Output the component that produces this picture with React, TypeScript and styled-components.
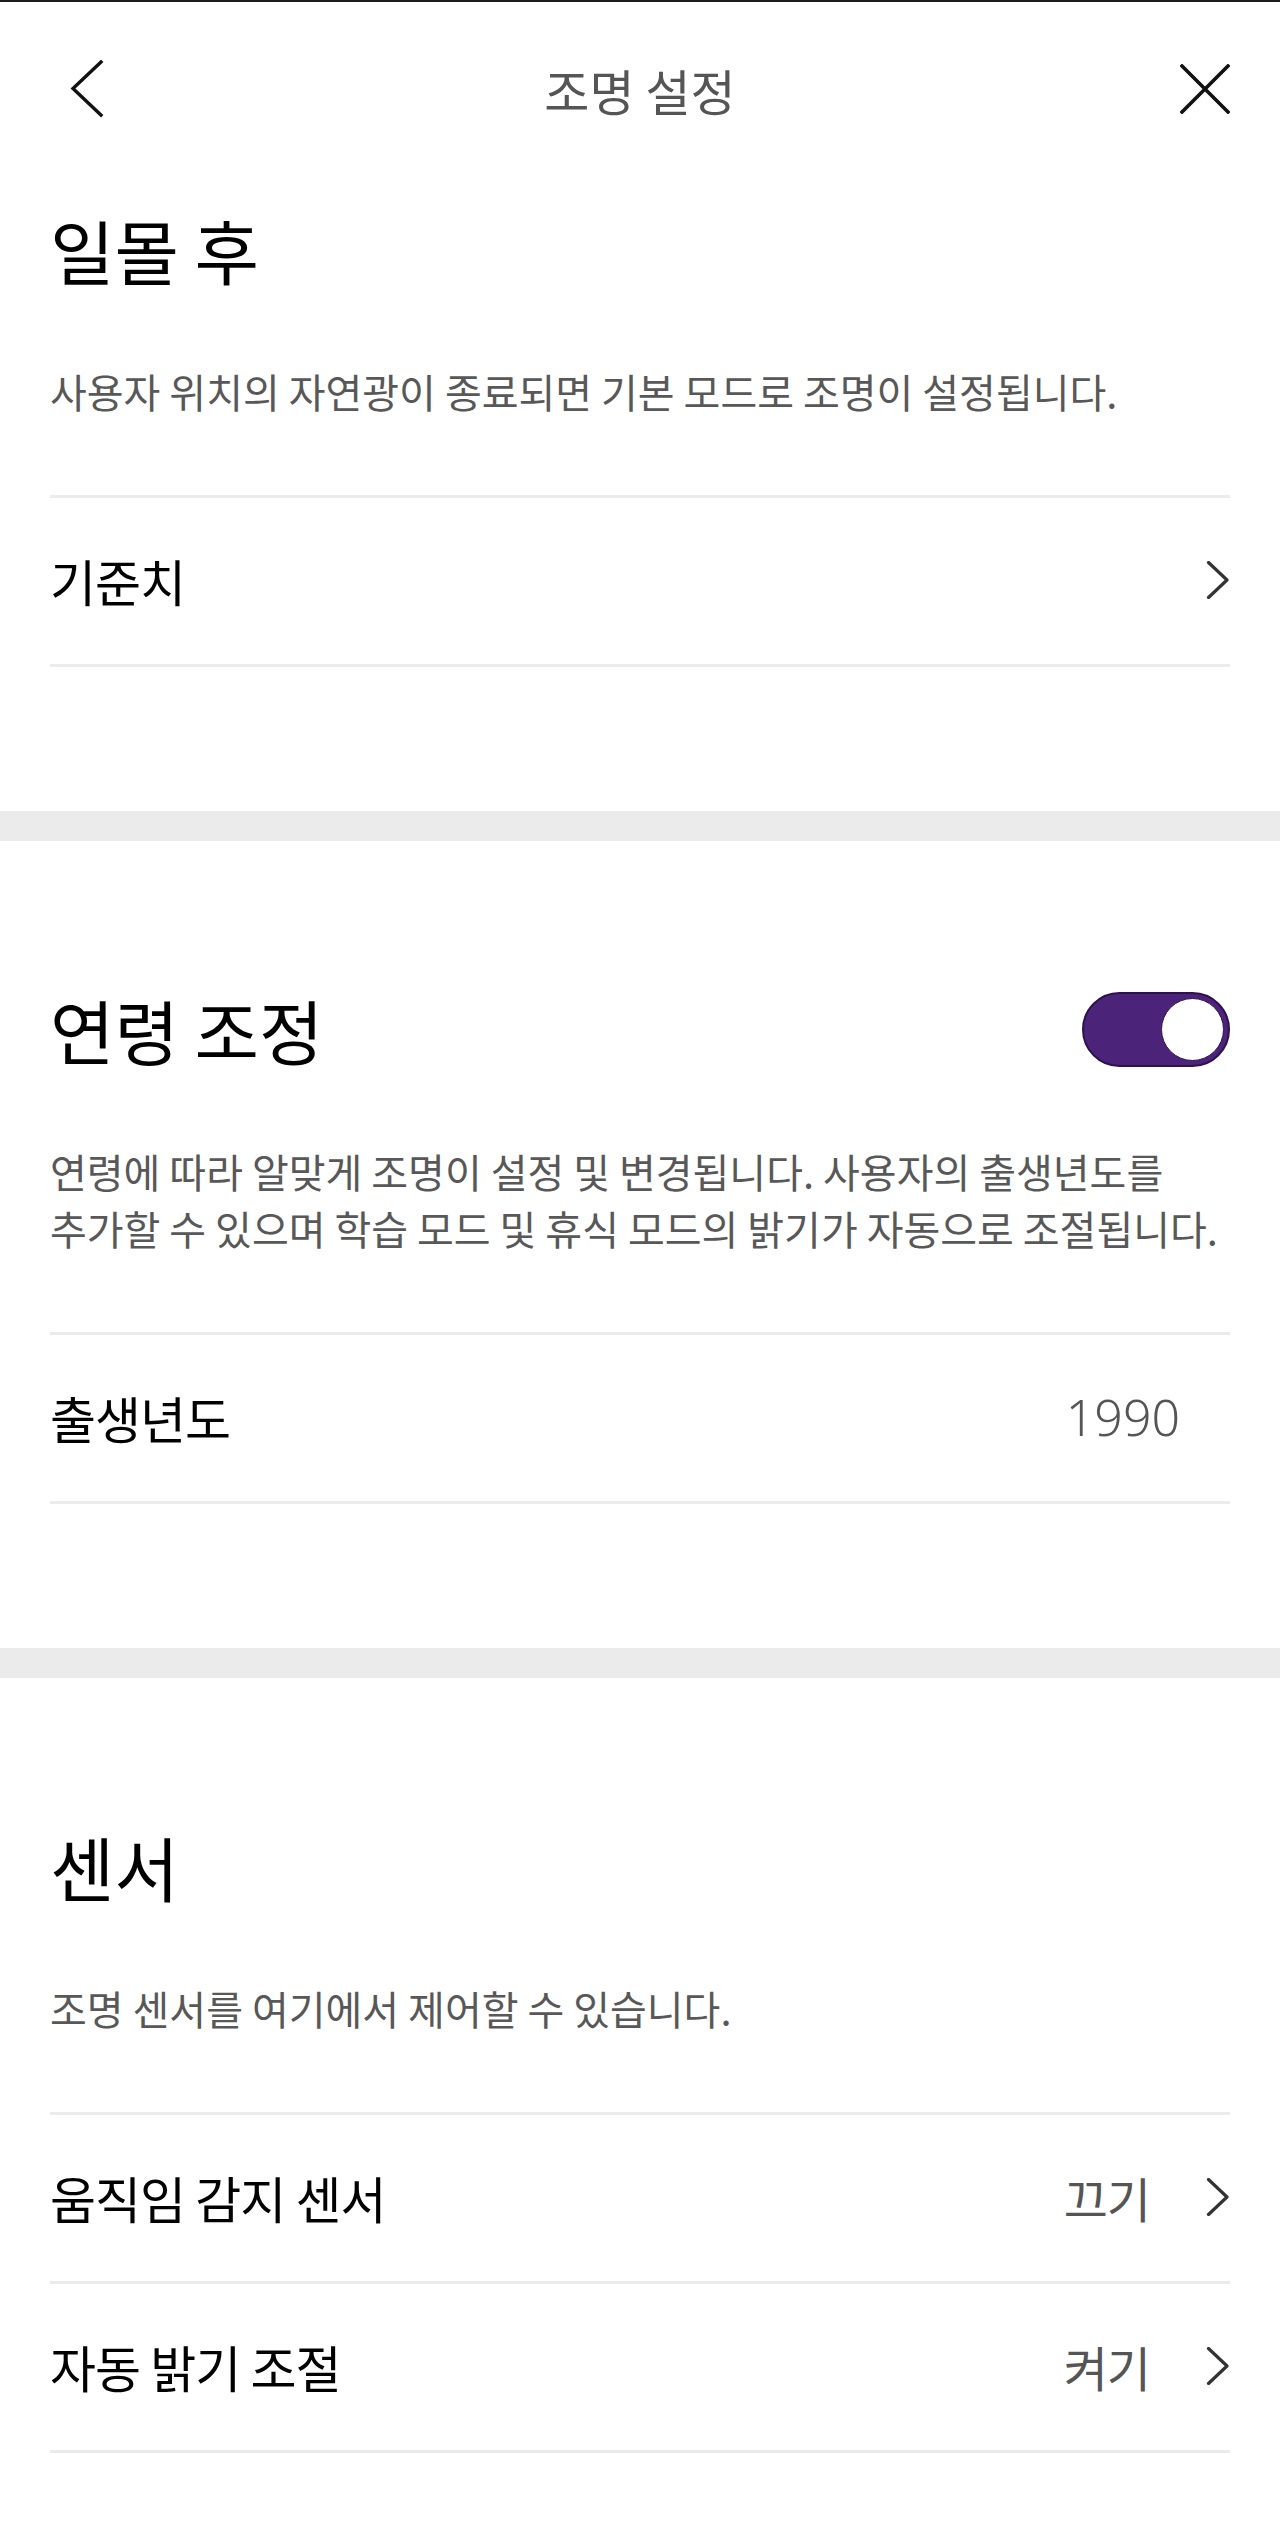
import React from "react";
import styled, { createGlobalStyle } from "styled-components";

const GlobalStyle = createGlobalStyle`
  html, body { margin: 0; padding: 0; background: #ffffff; }
  body { font-family: "Noto Sans CJK KR", "Noto Sans", sans-serif; }
  * { box-sizing: border-box; }
`;

const Page = styled.div`
  width: 1280px;
  min-height: 2524px;
  background: #fff;
  border-top: 2px solid #1e1e1e;
`;

const Header = styled.header`
  height: 174px;
  display: grid;
  grid-template-columns: 160px 1fr 160px;
  align-items: center;
  padding: 0 50px;
`;

const IconButton = styled.button<{ $align?: string; $offset?: number }>`
  border: 0;
  background: none;
  padding: 0;
  margin-left: ${(p) => p.$offset || 0}px;
  display: flex;
  justify-content: ${(p) => p.$align || "flex-start"};
  align-items: center;
  cursor: pointer;
`;

const HeaderTitle = styled.h1`
  margin: 0;
  text-align: center;
  font-size: 49px;
  font-weight: 400;
  color: #555;
  letter-spacing: 0;
`;

const Section = styled.section<{ $first?: boolean }>`
  padding: ${(p) => (p.$first ? 23 : 138)}px 50px 144px;
`;

const TitleRow = styled.div`
  display: flex;
  align-items: center;
  justify-content: space-between;
  height: 100px;
`;

const SectionTitle = styled.h2`
  margin: 0;
  font-size: 70px;
  font-weight: 400;
  color: #000;
  letter-spacing: 0;
`;

const Description = styled.p`
  margin: 64px 0 75px;
  font-size: 40px;
  line-height: 57px;
  color: #585858;
  letter-spacing: 0;
`;

const List = styled.div`
  border-top: 3px solid #ebebeb;
`;

const Row = styled.div`
  height: 169px;
  border-bottom: 3px solid #ebebeb;
  display: flex;
  align-items: center;
  justify-content: space-between;
  padding-bottom: 3px;
`;

const RowLabel = styled.span`
  font-size: 50px;
  color: #000;
  letter-spacing: -1px;
`;

const RowRight = styled.div`
  display: flex;
  align-items: center;
  gap: 56px;
`;

const RowValue = styled.span`
  font-size: 48px;
  color: #555;
  letter-spacing: -1px;
`;

const YearValue = styled.span`
  font-family: "Noto Sans", sans-serif;
  font-weight: 300;
  font-size: 50px;
  color: #555;
  margin-right: 50px;
`;

const Band = styled.div`
  height: 30px;
  background: #ebebeb;
`;

const Track = styled.button<{ $on: boolean }>`
  position: relative;
  width: 148px;
  height: 75px;
  border-radius: 38px;
  border: 2px solid #2f1152;
  background: ${(p) => (p.$on ? "#4b2479" : "#ccc")};
  padding: 0;
  cursor: pointer;
`;

const Knob = styled.span<{ $on: boolean }>`
  position: absolute;
  top: 4px;
  ${(p) => (p.$on ? "right: 4px;" : "left: 4px;")}
  width: 63px;
  height: 63px;
  border-radius: 50%;
  background: #fff;
  border: 1px solid #2f1152;
`;

const ChevronRight = () => (
  <svg width="24" height="38" viewBox="0 0 24 38" fill="none">
    <path d="M2.5 1.5 L21 19 L2.5 36.5" stroke="#333" strokeWidth="3.2" strokeLinecap="round" strokeLinejoin="round" />
  </svg>
);

const BackIcon = () => (
  <svg width="34" height="58" viewBox="0 0 34 58" fill="none">
    <path d="M31 2 L3 28.5 L31 55" stroke="#111" strokeWidth="3.4" strokeLinecap="square" />
  </svg>
);

const CloseIcon = () => (
  <svg width="50" height="50" viewBox="0 0 50 50" fill="none">
    <path d="M2 2 L48 48 M48 2 L2 48" stroke="#111" strokeWidth="3.6" strokeLinecap="square" />
  </svg>
);

const Toggle = ({ on }: { on: boolean }) => (
  <Track $on={on} aria-pressed={on}>
    <Knob $on={on} />
  </Track>
);

export default function App() {
  return (
    <>
      <GlobalStyle />
      <Page>
        <Header>
          <IconButton $offset={20} aria-label="back">
            <BackIcon />
          </IconButton>
          <HeaderTitle>조명 설정</HeaderTitle>
          <IconButton $align="flex-end" aria-label="close">
            <CloseIcon />
          </IconButton>
        </Header>

        <Section $first>
          <TitleRow>
            <SectionTitle>일몰 후</SectionTitle>
          </TitleRow>
          <Description>사용자 위치의 자연광이 종료되면 기본 모드로 조명이 설정됩니다.</Description>
          <List>
            <Row>
              <RowLabel>기준치</RowLabel>
              <ChevronRight />
            </Row>
          </List>
        </Section>
        <Band />

        <Section>
          <TitleRow>
            <SectionTitle>연령 조정</SectionTitle>
            <Toggle on />
          </TitleRow>
          <Description>
            연령에 따라 알맞게 조명이 설정 및 변경됩니다. 사용자의 출생년도를
            <br />
            추가할 수 있으며 학습 모드 및 휴식 모드의 밝기가 자동으로 조절됩니다.
          </Description>
          <List>
            <Row>
              <RowLabel>출생년도</RowLabel>
              <YearValue>1990</YearValue>
            </Row>
          </List>
        </Section>
        <Band />

        <Section>
          <TitleRow>
            <SectionTitle>센서</SectionTitle>
          </TitleRow>
          <Description>조명 센서를 여기에서 제어할 수 있습니다.</Description>
          <List>
            <Row>
              <RowLabel>움직임 감지 센서</RowLabel>
              <RowRight>
                <RowValue>끄기</RowValue>
                <ChevronRight />
              </RowRight>
            </Row>
            <Row>
              <RowLabel>자동 밝기 조절</RowLabel>
              <RowRight>
                <RowValue>켜기</RowValue>
                <ChevronRight />
              </RowRight>
            </Row>
          </List>
        </Section>
      </Page>
    </>
  );
}
